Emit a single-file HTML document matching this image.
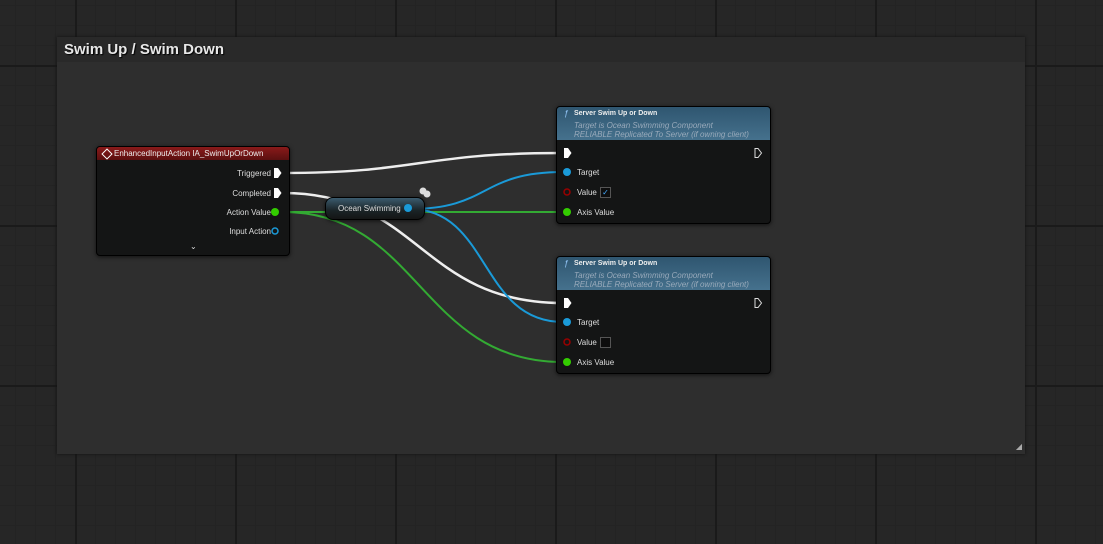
<!DOCTYPE html>
<html><head><style>
body{margin:0;width:1103px;height:544px;overflow:hidden;background:#262626;font-family:"Liberation Sans",sans-serif;position:relative}
.grid{position:absolute;inset:0;background-image:
linear-gradient(90deg,#1a1a1a 2px,transparent 2px),linear-gradient(#1a1a1a 2px,transparent 2px),
linear-gradient(90deg,#232323 1px,transparent 1px),linear-gradient(#232323 1px,transparent 1px);
background-size:160px 160px,160px 160px,20px 20px,20px 20px;background-position:75px 65px,75px 65px,15px 5px,15px 5px}
.cm{position:absolute;left:57px;top:37px;width:968px;height:417px;background:#2e2e2e;box-shadow:0 0 3px #111}
.cmh{position:absolute;left:0;top:0;width:100%;height:25px;background:#292929;color:#e8e8e8;font-weight:bold;font-size:15px;line-height:26px;padding-left:7px;box-sizing:border-box;text-shadow:1px 1px 1px #000}
.node{position:absolute;background:#141515;border:1px solid #000;border-radius:4px;box-shadow:0 1px 4px #000a;color:#ddd;font-size:8px}
.t{position:absolute;font-size:8px;color:#ddd}
</style></head><body>
<div class="grid"></div>
<div class="cm"><div class="cmh">Swim Up / Swim Down</div>
<div style="position:absolute;right:3px;bottom:3px;color:#aaa;font-size:8px">◢</div></div>

<svg width="1103" height="544" style="position:absolute;left:0;top:0" fill="none">
<path d="M283 173 C420 173 420 153 563 153" stroke="#eee" stroke-width="2.5"/>
<path d="M283 193 C420 193 420 303 563 303" stroke="#eee" stroke-width="2.5"/>
<path d="M283 212 L563 212" stroke="#3a3" stroke-width="2"/>
<path d="M283 212 C420 212 420 362 563 362" stroke="#3a3" stroke-width="2"/>
<path d="M410 209 C490 209 480 172 563 172" stroke="#1a9ad8" stroke-width="2"/>
<path d="M410 209 C490 209 480 322 563 322" stroke="#1a9ad8" stroke-width="2"/>
</svg>

<div class="node" style="left:96px;top:146px;width:192px;height:108px">
<div style="height:13px;background:linear-gradient(#8a1a1a,#5a1010);border-radius:3px 3px 0 0;color:#eee;font-size:8px;line-height:13px;padding-left:17px">EnhancedInputAction IA_SwimUpOrDown</div>
<div style="position:absolute;left:6px;top:3px;width:6px;height:6px;border:1px solid #fff;transform:rotate(45deg)"></div>
<div class="t" style="right:18px;top:22px">Triggered</div>
<div class="t" style="right:18px;top:42px">Completed</div>
<div class="t" style="right:18px;top:61px">Action Value</div>
<div class="t" style="right:18px;top:80px">Input Action</div>
<div class="t" style="left:93px;top:95px">⌄</div>
</div>

<div class="node" style="left:325px;top:197px;width:98px;height:21px;border-radius:8px;background:linear-gradient(#3b5b6e,#1a2326 60%,#141515)">
<div class="t" style="left:12px;top:6px">Ocean Swimming</div></div>

<div class="node" style="left:556px;top:106px;width:213px;height:116px">
<div style="height:33px;background:linear-gradient(#2f5670,#45718d);border-radius:3px 3px 0 0;position:relative">
<div class="t" style="left:7px;top:2px;color:#9cf;font-style:italic">ƒ</div>
<div class="t" style="left:17px;top:3px;font-weight:bold;font-size:7px;color:#eee">Server Swim Up or Down</div>
<div class="t" style="left:17px;top:14px;font-style:italic;color:#9ab">Target is Ocean Swimming Component</div>
<div class="t" style="left:17px;top:23px;font-style:italic;color:#9ab">RELIABLE Replicated To Server (if owning client)</div></div>
<div class="t" style="left:20px;top:61px">Target</div>
<div class="t" style="left:20px;top:81px">Value</div>
<div style="position:absolute;left:43px;top:80px;width:9px;height:9px;border:1px solid #555;background:#0d0d0d;color:#4af;font-size:8px;line-height:9px;text-align:center">✓</div>
<div class="t" style="left:20px;top:101px">Axis Value</div>
</div>

<div class="node" style="left:556px;top:256px;width:213px;height:116px">
<div style="height:33px;background:linear-gradient(#2f5670,#45718d);border-radius:3px 3px 0 0;position:relative">
<div class="t" style="left:7px;top:2px;color:#9cf;font-style:italic">ƒ</div>
<div class="t" style="left:17px;top:3px;font-weight:bold;font-size:7px;color:#eee">Server Swim Up or Down</div>
<div class="t" style="left:17px;top:14px;font-style:italic;color:#9ab">Target is Ocean Swimming Component</div>
<div class="t" style="left:17px;top:23px;font-style:italic;color:#9ab">RELIABLE Replicated To Server (if owning client)</div></div>
<div class="t" style="left:20px;top:61px">Target</div>
<div class="t" style="left:20px;top:81px">Value</div>
<div style="position:absolute;left:43px;top:80px;width:9px;height:9px;border:1px solid #555;background:#0d0d0d"></div>
<div class="t" style="left:20px;top:101px">Axis Value</div>
</div>

<svg width="1103" height="544" style="position:absolute;left:0;top:0" fill="none">
<g fill="#fff"><path d="M274 168h4l3.5 5l-3.5 5h-4z"/><path d="M274 188h4l3.5 5l-3.5 5h-4z"/><path d="M564 148h4l3.5 5l-3.5 5h-4z"/><path d="M564 298h4l3.5 5l-3.5 5h-4z"/></g>
<g stroke="#ddd" stroke-width="1"><path d="M755 148.5h3l3.5 4.5l-3.5 4.5h-3z"/><path d="M755 298.5h3l3.5 4.5l-3.5 4.5h-3z"/></g>
<circle cx="275" cy="212" r="4" fill="#3c0"/>
<circle cx="275" cy="231" r="3" stroke="#1a9ad8" stroke-width="1.5"/>
<circle cx="408" cy="208" r="4" fill="#1a9ad8"/>
<circle cx="567" cy="172" r="4" fill="#1a9ad8"/><circle cx="567" cy="322" r="4" fill="#1a9ad8"/>
<circle cx="567" cy="212" r="4" fill="#3c0"/><circle cx="567" cy="362" r="4" fill="#3c0"/>
<circle cx="567" cy="192" r="3" stroke="#900" stroke-width="1.5"/><circle cx="567" cy="342" r="3" stroke="#900" stroke-width="1.5"/>
<circle cx="423" cy="191" r="3.5" fill="#ddd"/><circle cx="427" cy="194" r="3.5" fill="#ddd"/>
</svg>
</body></html>
